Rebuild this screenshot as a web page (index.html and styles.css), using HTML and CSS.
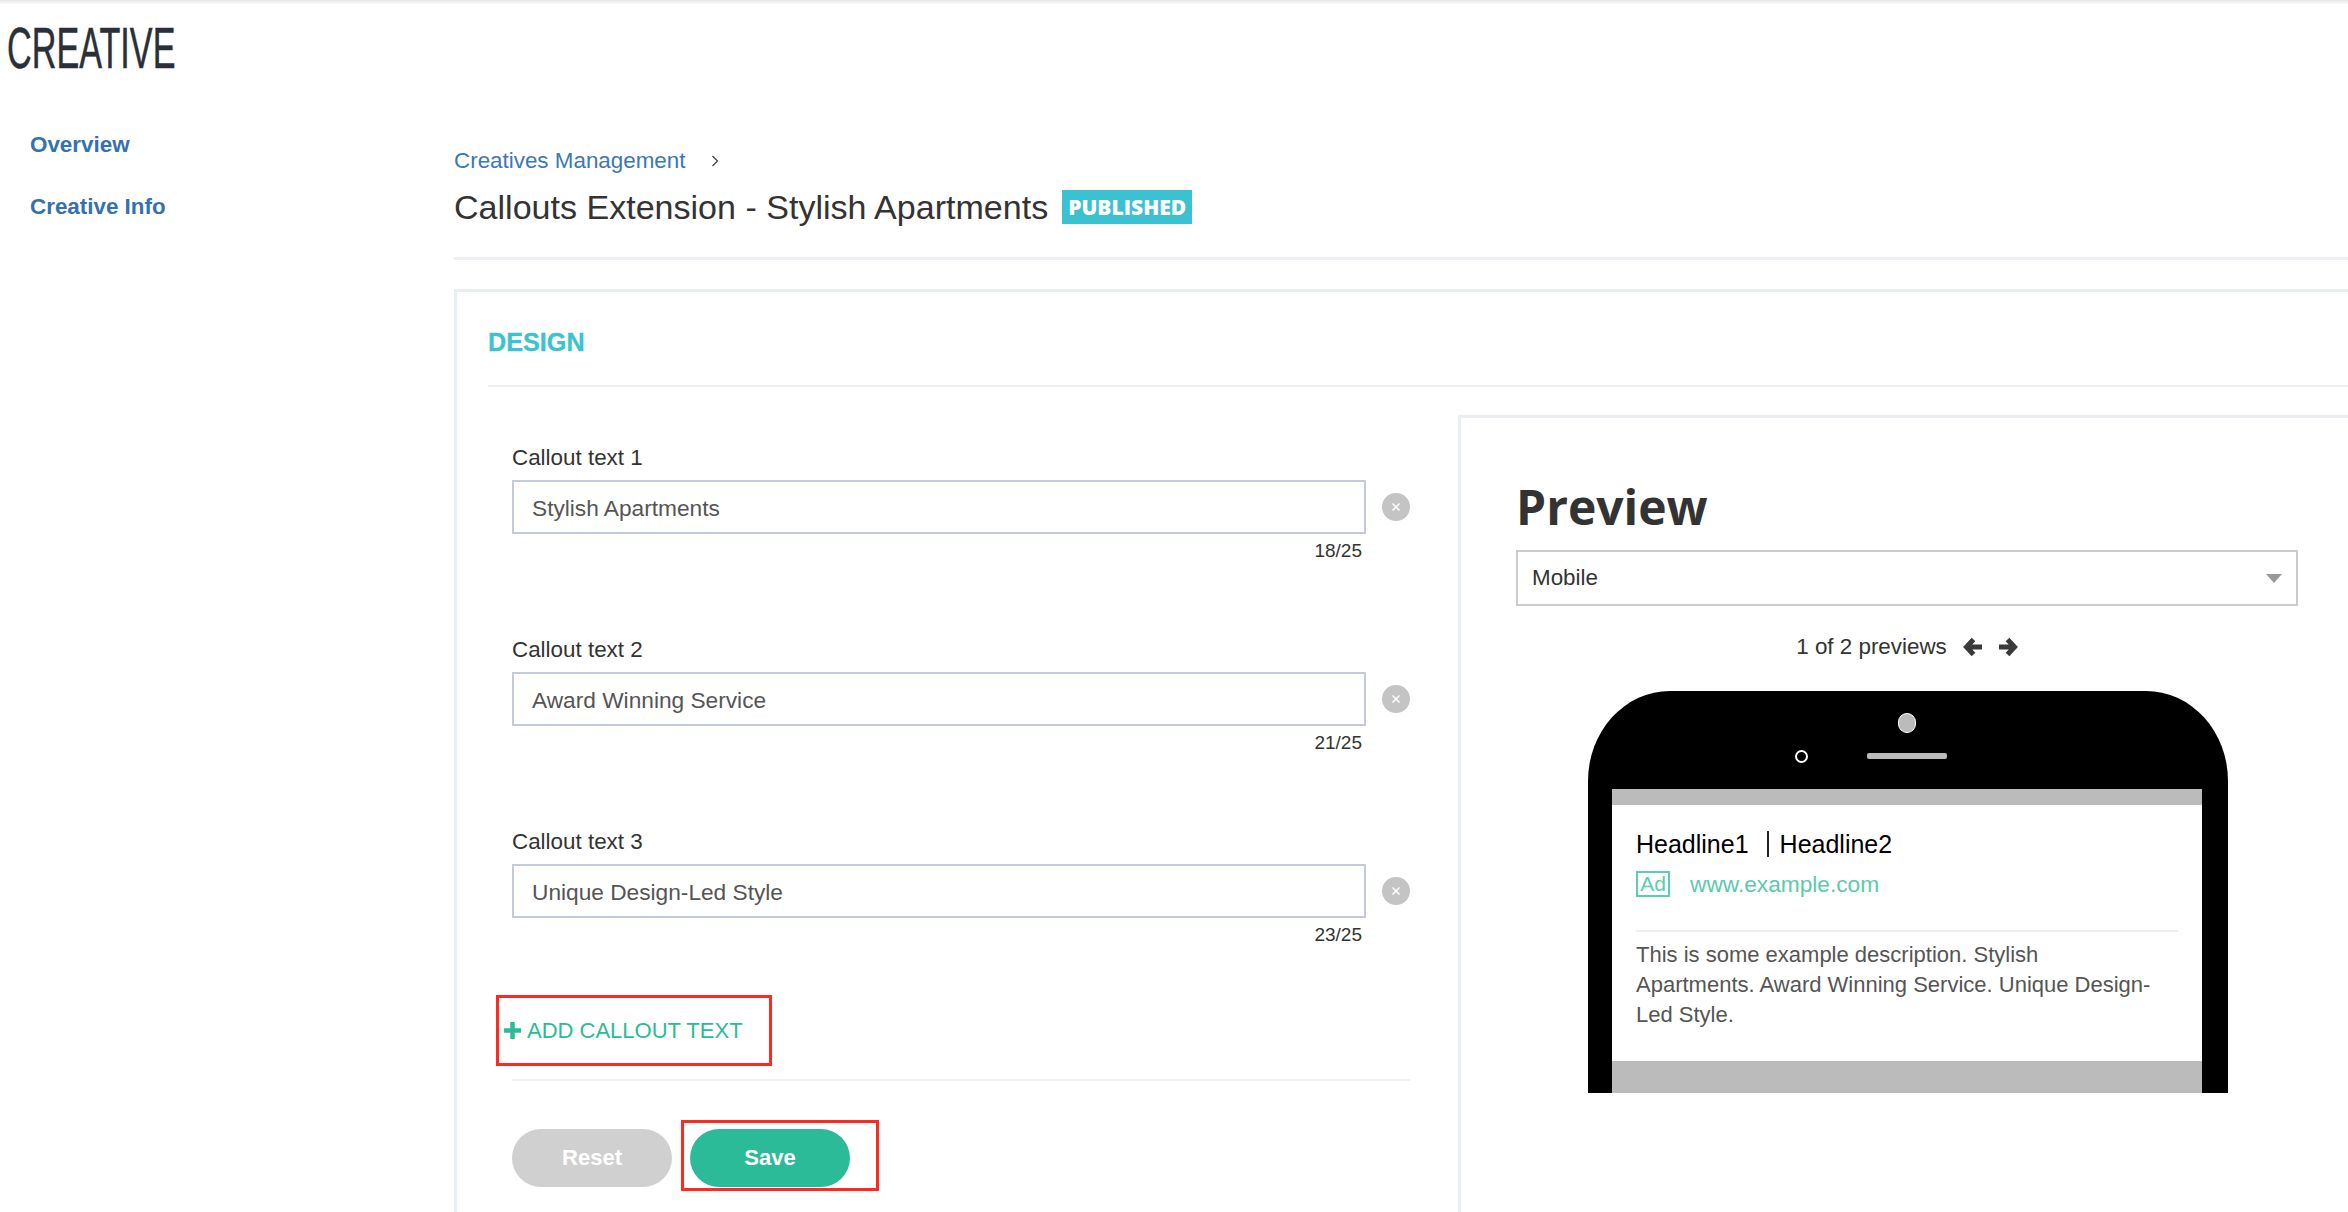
FILE: index.html
```html
<!DOCTYPE html>
<html lang="en">
<head>
<meta charset="utf-8">
<title>Creative</title>
<link rel="stylesheet" href="styles.css">
</head>
<body>
<div class="page">
  <div class="top-shade"></div>
  <h1 class="brand"><span class="brand-text">CREATIVE</span></h1>
  <div class="layout">
    <nav class="sidebar">
      <a class="side-link">Overview</a>
      <a class="side-link">Creative Info</a>
    </nav>
    <main class="main">
      <header class="page-head">
        <div class="crumbs">
          <a class="crumb">Creatives Management</a>
          <svg class="chev" viewBox="0 0 8 12" width="8" height="12"><path d="M1.5 1 L6.5 6 L1.5 11" fill="none" stroke="#444" stroke-width="1.3"/></svg>
        </div>
        <div class="title-row">
          <h2 class="title">Callouts Extension - Stylish Apartments</h2>
          <span class="badge">PUBLISHED</span>
        </div>
      </header>
      <section class="card">
        <h3 class="section-head">DESIGN</h3>
        <div class="card-body">
          <form class="form">
            <div class="group">
              <div class="label">Callout text 1</div>
              <div class="field-row">
                <div class="input">Stylish Apartments</div>
                <span class="clear"><svg viewBox="0 0 10 10" width="10" height="10"><path d="M1.5 1.5 L8.5 8.5 M8.5 1.5 L1.5 8.5" fill="none" stroke="#fff" stroke-width="1.5"/></svg></span>
              </div>
              <div class="count">18/25</div>
            </div>
            <div class="group">
              <div class="label">Callout text 2</div>
              <div class="field-row">
                <div class="input">Award Winning Service</div>
                <span class="clear"><svg viewBox="0 0 10 10" width="10" height="10"><path d="M1.5 1.5 L8.5 8.5 M8.5 1.5 L1.5 8.5" fill="none" stroke="#fff" stroke-width="1.5"/></svg></span>
              </div>
              <div class="count">21/25</div>
            </div>
            <div class="group">
              <div class="label">Callout text 3</div>
              <div class="field-row">
                <div class="input">Unique Design-Led Style</div>
                <span class="clear"><svg viewBox="0 0 10 10" width="10" height="10"><path d="M1.5 1.5 L8.5 8.5 M8.5 1.5 L1.5 8.5" fill="none" stroke="#fff" stroke-width="1.5"/></svg></span>
              </div>
              <div class="count">23/25</div>
            </div>
            <a class="add annotated">
              <svg class="plus" viewBox="0 0 17 17" width="17" height="17"><path d="M8.5 0 V17 M0 8.5 H17" fill="none" stroke="#2bbb98" stroke-width="4.5"/></svg>
              <span>ADD CALLOUT TEXT</span>
            </a>
            <div class="actions">
              <span class="btn btn-reset">Reset</span>
              <span class="btn btn-save annotated">Save</span>
            </div>
          </form>
          <aside class="preview">
            <div class="preview-inner">
              <h3 class="preview-title">Preview</h3>
              <div class="select">
                <span>Mobile</span>
                <span class="caret"></span>
              </div>
              <div class="pager">
                <span>1 of 2 previews</span>
                <svg class="arrow arrow-left" viewBox="0 0 20 20" width="20" height="20"><path d="M10.5 2.5 L3.5 10 L10.5 17.5 M5 10 H19" fill="none" stroke="#3a3a3a" stroke-width="5"/></svg>
                <svg class="arrow" viewBox="0 0 20 20" width="20" height="20"><path d="M9.5 2.5 L16.5 10 L9.5 17.5 M15 10 H1" fill="none" stroke="#3a3a3a" stroke-width="5"/></svg>
              </div>
              <div class="phone">
                <div class="phone-head">
                  <span class="sensor"></span>
                  <span class="speaker"><span class="camera"></span></span>
                </div>
                <div class="screen">
                  <div class="band band-top"></div>
                  <div class="ad">
                    <div class="headline"><span>Headline1</span><span class="sep"></span><span>Headline2</span></div>
                    <div class="url-row"><span class="ad-tag">Ad</span><span class="url">www.example.com</span></div>
                    <p class="desc">This is some example description. Stylish<br>Apartments. Award Winning Service. Unique Design-Led Style.</p>
                  </div>
                  <div class="band band-bottom"></div>
                </div>
              </div>
            </div>
          </aside>
        </div>
      </section>
    </main>
  </div>
</div>
</body>
</html>
```
FILE: styles.css
```css
* { box-sizing: border-box; }
html, body { margin: 0; padding: 0; background: #fff; }
body { font-family: "Liberation Sans", Arial, sans-serif; color: #333; }
.page { width: 2348px; height: 1212px; overflow: hidden; }
.top-shade { height: 4px; background: linear-gradient(#e6e6e6, #fbfbfb); }

.brand { margin: 0; height: 88px; padding-left: 7px; display: flex; align-items: center; font-weight: 400; font-size: 57px; line-height: 60px; color: #2a3038; }
.brand-text { display: inline-block; transform: scaleX(0.6); transform-origin: left center; -webkit-text-stroke: 0.5px #2a3038; }

.layout { display: flex; }
.sidebar { width: 454px; flex: none; padding: 37px 0 0 30px; display: flex; flex-direction: column; gap: 30px; }
.side-link { font-size: 22.4px; line-height: 32px; font-weight: 700; color: #3571b0; }
.main { flex: 1; min-width: 0; padding-top: 54px; }

.page-head { border-bottom: 3px solid #eef1f3; height: 114px; }
.crumbs { display: flex; align-items: center; gap: 26px; height: 30px; margin-bottom: 9px; }
.crumb { font-size: 22.4px; line-height: 30px; color: #3b78b5; }
.title-row { display: flex; align-items: center; gap: 14px; height: 44px; }
.title { margin: 0; font-size: 34.05px; font-weight: 400; line-height: 44px; color: #333; }
.badge { width: 130px; height: 34px; background: #3cc1d0; color: #fff; font-family: "Open Sans", sans-serif; font-size: 21px; font-weight: 800; line-height: 34px; text-align: center; }

.card { margin-top: 29px; margin-right: -20px; border: 3px solid #e9eef2; padding-left: 31px; height: 1000px; }
.section-head { margin: 0; height: 95px; line-height: 100px; border-bottom: 2px solid #eef1f3; font-size: 25.2px; font-weight: 700; color: #3cc3d0; -webkit-text-stroke: 0.3px #3cc3d0; }
.card-body { display: flex; }

.form { width: 922px; flex: none; padding: 57px 0 0 24px; margin: 0 48px 0 0; }
.group + .group { margin-top: 73px; }
.label { font-size: 22.4px; line-height: 28px; color: #333; margin-bottom: 8px; }
.field-row { display: flex; align-items: center; gap: 16px; }
.input { width: 854px; height: 54px; border: 2px solid #c3cbdb; padding-left: 18px; font-size: 22.7px; line-height: 52px; color: #555; }
.clear { display: flex; align-items: center; justify-content: center; width: 28px; height: 28px; border-radius: 50%; background: #c4c4c4; }
.count { width: 850px; margin-top: 5px; font-size: 19px; line-height: 24px; text-align: right; color: #333; }

.annotated { position: relative; }
.annotated::after { content: ""; position: absolute; border: 3px solid #ff2a1f; pointer-events: none; }
.add { display: flex; align-items: center; gap: 6px; width: 276px; height: 71px; margin: 48px 0 0 -16px; padding-left: 8px; font-size: 22px; color: #2bbb98; }
.add::after { inset: 0; }
.plus { flex: none; }

.actions { display: flex; gap: 18px; margin-top: 13px; padding-top: 48px; border-top: 2px solid #efefef; }
.btn { width: 160px; height: 58px; border-radius: 29px; color: #fff; font-size: 22px; font-weight: 700; line-height: 58px; text-align: center; }
.btn-reset { background: #d0d0d0; }
.btn-save { background: #2bbb98; }
.btn-save::after { inset: -9px -29px -4px -9px; }

.preview { flex: 1; margin-top: 28px; border: 3px solid #e9eef2; padding: 59px 0 0 55px; height: 900px; }
.preview-inner { width: 782px; }
.preview-title { margin: 0 0 13px; font-family: "Open Sans", sans-serif; font-size: 48px; font-weight: 700; line-height: 60px; color: #333; }
.select { display: flex; align-items: center; justify-content: space-between; height: 56px; border: 2px solid #ccc; padding: 0 14px; font-size: 22.4px; color: #333; }
.caret { width: 0; height: 0; border-left: 8px solid transparent; border-right: 8px solid transparent; border-top: 9px solid #999; }
.pager { display: flex; align-items: center; justify-content: center; gap: 15px; height: 30px; margin: 26px 0 29px; font-size: 22.4px; color: #333; }
.arrow-left { margin-left: 1px; }

.phone { width: 640px; height: 402px; margin: 0 0 0 72px; background: #000; border-radius: 82px 82px 0 0 / 90px 90px 0 0; overflow: hidden; padding: 0 26px 0 24px; }
.phone-head { height: 98px; padding-top: 22px; display: flex; flex-direction: column; align-items: center; }
.sensor { width: 18px; height: 20px; border-radius: 9px; background: #bbb; border: 1px solid #fff; }
.speaker { position: relative; width: 80px; height: 6px; margin-top: 20px; border-radius: 2px; background: #bbb; }
.camera { position: absolute; left: -72px; top: -3px; width: 13px; height: 13px; border-radius: 50%; border: 2px solid #fff; background: #000; }
.screen { background: #fff; }
.band { background: #bbb; }
.band-top { height: 16px; }
.band-bottom { height: 32px; }
.ad { height: 256px; padding: 24px 24px 0; }
.headline { display: flex; align-items: center; height: 30px; font-size: 25px; line-height: 30px; color: #000; }
.sep { width: 2px; height: 26px; margin: 0 11px 0 18px; background: #222; }
.url-row { display: flex; align-items: center; gap: 20px; margin-top: 12px; }
.ad-tag { width: 34px; height: 26px; border: 2px solid #5ccdb0; color: #5ccdb0; font-size: 21px; line-height: 22px; text-align: center; }
.url { font-size: 22.7px; line-height: 26px; color: #5cc9ae; }
.desc { margin: 33px 0 0; padding-top: 8px; border-top: 2px solid #efefef; font-size: 22px; line-height: 30px; color: #555; }
```
